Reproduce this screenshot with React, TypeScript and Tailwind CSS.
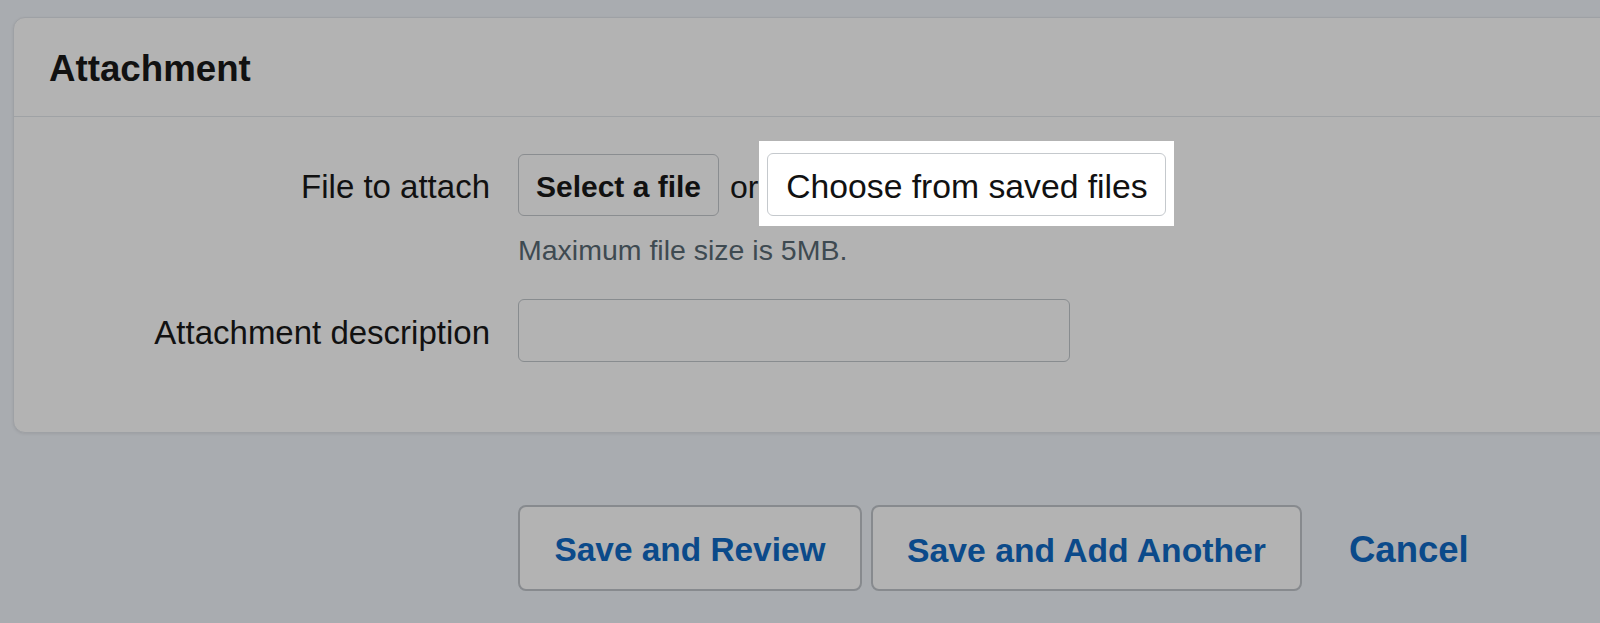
export default function App() {
  return (
    <div className="w-[1600px] h-[623px] overflow-hidden bg-[#a9acb0] pt-[17px] font-['Liberation_Sans',Arial,sans-serif]">
      <div className="ml-[13px] w-[1640px] bg-[#b3b3b3] border-[1.5px] border-[#9ea1a5] rounded-[12px] shadow-[0_1px_3px_rgba(0,0,0,0.08)]">
        <div className="h-[99px] flex items-center pl-[35px] pt-[4px] border-b-[1.5px] border-[#9fa2a5]">
          <h2 className="text-[36.7px] leading-none font-bold text-[#111]">Attachment</h2>
        </div>
        <div className="pt-[36px] pb-[70px]">
          <div className="flex items-start">
            <div className="w-[476px] h-[62px] pt-[5px] flex items-center justify-end text-[33px] text-[#111]">File to attach</div>
            <div className="ml-[28px] flex flex-col">
              <div className="flex items-center">
                <button className="w-[201px] h-[62px] pt-[4px] border-[1.5px] border-[#8a8d90] rounded-[6px] text-[30px] font-bold text-[#111]">Select a file</button>
                <span className="ml-[11px] pt-[5px] text-[32px] text-[#111]">or</span>
                <div className="ml-[1px] bg-white px-[8px] pt-[12px] pb-[10px] -mt-[12px] -mb-[10px]">
                  <button className="w-[399px] h-[63px] pt-[4px] bg-white border-[1.5px] border-[#c5c9cd] rounded-[6px] text-[33.7px] text-[#111]">Choose from saved files</button>
                </div>
              </div>
              <p className="mt-[17px] text-[28.5px] leading-[34px] text-[#3e4a51]">Maximum file size is 5MB.</p>
            </div>
          </div>
          <div className="flex items-center mt-[32px]">
            <div className="w-[476px] h-[63px] pt-[5px] flex items-center justify-end text-[33px] text-[#111]">Attachment description</div>
            <div className="ml-[28px] w-[552px] h-[63px] border-[1.5px] border-[#888c8f] rounded-[6px]"></div>
          </div>
        </div>
      </div>
      <div className="mt-[72px] ml-[518px] flex items-center">
        <button className="w-[344px] h-[86px] pt-[4px] border-[2px] border-[#878a8e] rounded-[8px] bg-[#b3b3b3] text-[33.4px] font-bold text-[#0b4a8a]">Save and Review</button>
        <button className="ml-[9px] w-[431px] h-[86px] pt-[4px] border-[2px] border-[#878a8e] rounded-[8px] bg-[#b3b3b3] text-[33.7px] font-bold text-[#0b4a8a]">Save and Add Another</button>
        <span className="ml-[47px] pt-[4px] text-[36.5px] font-bold text-[#0b4a8a]">Cancel</span>
      </div>
    </div>
  );
}
